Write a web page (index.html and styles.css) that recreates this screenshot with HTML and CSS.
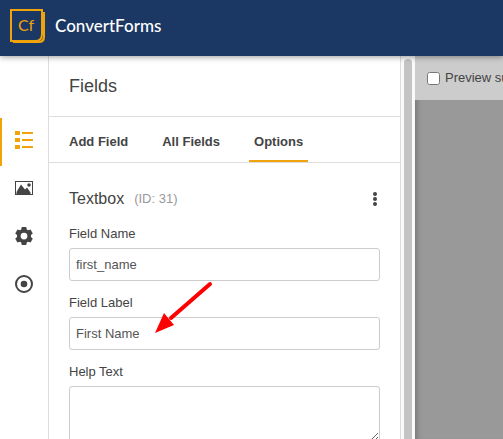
FILE: index.html
```html
<!DOCTYPE html>
<html lang="en">
<head>
    <meta charset="UTF-8">
    <meta name="viewport" content="width=device-width, initial-scale=1.0">
    <title>ConvertForms</title>
    <link rel="stylesheet" href="styles.css">
</head>
<body>
    <header class="topbar">
        <svg class="logo" width="36" height="36" viewBox="0 0 36 36" aria-hidden="true">
            <path d="M33 3h2v25q0 6-6 6H3v-2h25q5 0 5-5z" fill="#f0a30a"/>
            <path d="M1 1h31v24q0 7-7 7H1z" fill="#1b3764" stroke="#f0a30a" stroke-width="2"/>
            <text class="logo-text" x="8" y="22">Cf</text>
        </svg>
        <span class="brand">ConvertForms</span>
    </header>
    <div class="app">
        <nav class="sidebar">
            <button class="side-btn active" aria-label="Fields">
                <svg width="18" height="18" viewBox="0 0 18 18" fill="currentColor">
                    <path d="M0 0h5v4H0zM0 7h5v4H0zM0 14h5v4H0zM7 1h11v2H7zM7 8h11v2H7zM7 15h11v2H7z"/>
                </svg>
            </button>
            <button class="side-btn" aria-label="Design">
                <svg width="18" height="18" viewBox="0 0 18 18" fill="currentColor">
                    <path fill-rule="evenodd" d="M0 2h18v14H0zM1 3v12h16V3z"/>
                    <path d="M1.500 15V13L6 5.500l4 5 2-2 3.500 5V15z"/>
                    <circle cx="14" cy="6" r="1.800"/>
                </svg>
            </button>
            <button class="side-btn" aria-label="Settings">
                <svg width="18" height="18" viewBox="0 0 24 24" fill="currentColor">
                    <path fill-rule="evenodd" d="M9 0h6l.7 3.300 1.800 1 3.200-1 3 5.200-2.400 2.200v2.600l2.400 2.200-3 5.200-3.200-1-1.800 1L15 24H9l-.7-3.300-1.800-1-3.200 1-3-5.200 2.400-2.200v-2.600L.3 8.500l3-5.200 3.200 1 1.800-1zM12 7.500a4.500 4.500 0 1 0 0 9 4.500 4.500 0 0 0 0-9z"/>
                </svg>
            </button>
            <button class="side-btn" aria-label="Behavior">
                <svg width="18" height="18" viewBox="0 0 18 18">
                    <circle cx="9" cy="9" r="8" fill="none" stroke="currentColor" stroke-width="2"/>
                    <circle cx="9" cy="9" r="3.300" fill="currentColor"/>
                </svg>
            </button>
        </nav>
        <main class="panel">
            <h1 class="panel-title">Fields</h1>
            <div class="tabs">
                <button class="tab">Add Field</button>
                <button class="tab">All Fields</button>
                <button class="tab active">Options</button>
            </div>
            <form class="options">
                <div class="options-head">
                    <h2>Textbox</h2>
                    <span class="field-id">(ID: 31)</span>
                    <button type="button" class="more" aria-label="More">
                        <svg width="4" height="14" viewBox="0 0 4 14" fill="currentColor">
                            <circle cx="2" cy="2" r="2"/>
                            <circle cx="2" cy="7" r="2"/>
                            <circle cx="2" cy="12" r="2"/>
                        </svg>
                    </button>
                </div>
                <div class="field">
                    <label for="field-name">Field Name</label>
                    <input type="text" id="field-name" value="first_name">
                </div>
                <div class="field">
                    <label for="field-label">Field Label</label>
                    <input type="text" id="field-label" value="First Name">
                    <svg class="arrow" width="60" height="54" viewBox="0 0 60 54" aria-hidden="true">
                        <path d="M57 3L18 37" stroke="#f00" stroke-width="4" stroke-linecap="round"/>
                        <path d="M2 52L11 32L21 44z" fill="#f00"/>
                    </svg>
                </div>
                <div class="field">
                    <label for="help-text">Help Text</label>
                    <textarea id="help-text"></textarea>
                </div>
            </form>
        </main>
        <div class="scrollbar"><div class="thumb"></div></div>
        <section class="preview">
            <div class="preview-bar">
                <input type="checkbox" id="preview-success">
                <label for="preview-success">Preview successful submission</label>
            </div>
        </section>
    </div>
</body>
</html>
```

FILE: styles.css
```css
* {
    box-sizing: border-box;
}
body {
    font-family: "Liberation Sans", Arial, sans-serif;
    font-size: 13px;
    line-height: 16px;
    color: #444;
    margin: 0;
    height: 100vh;
    display: flex;
    flex-direction: column;
    overflow: hidden;
}
button {
    background: none;
    border: none;
    padding: 0;
    font: inherit;
    color: inherit;
    cursor: pointer;
}

/* Top bar */
.topbar {
    flex: none;
    display: flex;
    align-items: center;
    gap: 9px;
    height: 56px;
    padding: 0 10px 2px;
    background: #1b3764;
    box-shadow: 0 1px 6px rgba(0, 0, 0, 0.4);
    z-index: 1;
}
.logo-text {
    font-family: Lato, sans-serif;
    font-size: 16px;
    fill: #f0a30a;
}
.brand {
    padding-bottom: 2px;
    font-family: Lato, sans-serif;
    font-size: 17px;
    font-weight: 500;
    color: #fff;
}
.app {
    flex: 1;
    min-height: 0;
    display: flex;
}

/* Sidebar */
.sidebar {
    flex: none;
    width: 49px;
    padding-top: 62px;
    border-right: 1px solid #ddd;
}
.side-btn {
    display: flex;
    align-items: center;
    justify-content: center;
    width: 100%;
    height: 48px;
    padding: 0 2px 4px 0;
    border-left: 2px solid transparent;
}
.side-btn.active {
    color: #f0a30a;
    border-left-color: #f0a30a;
}

/* Panel */
.panel {
    flex: none;
    width: 352px;
    border-right: 1px solid #ddd;
    overflow: hidden;
}
.panel-title {
    margin: 0;
    padding: 20px;
    font-size: 18px;
    font-weight: normal;
    line-height: 20px;
    border-bottom: 1px solid #ddd;
}
.tabs {
    display: flex;
    gap: 24px;
    padding: 0 15px;
    border-bottom: 1px solid #ddd;
}
.tab {
    height: 45px;
    padding: 6px 5px 0;
    font-weight: bold;
    border-bottom: 2px solid transparent;
}
.tab.active {
    border-bottom-color: #f0a30a;
}
.options {
    padding: 26px 20px;
}
.options-head {
    display: flex;
    align-items: center;
    gap: 10px;
    height: 20px;
    margin-bottom: 17px;
}
.options-head h2 {
    margin: 0;
    font-size: 16px;
    font-weight: normal;
}
.field-id {
    color: #999;
}
.more {
    display: flex;
    margin-left: auto;
    padding: 0 3px;
}
.field {
    position: relative;
    margin-bottom: 14px;
}
.field label {
    display: block;
    margin-bottom: 6px;
}
.field input,
.field textarea {
    display: block;
    width: 100%;
    height: 33px;
    padding: 0 6px;
    font: inherit;
    color: #555;
    background: #fff;
    border: 1px solid #ccc;
    border-radius: 3px;
}
.field textarea {
    height: 56px;
}
.arrow {
    position: absolute;
    left: 84px;
    top: -14px;
}

/* Scrollbar */
.scrollbar {
    flex: none;
    width: 14px;
    padding: 3px 3px 0;
    background: #fafafa;
}
.thumb {
    height: 100%;
    background: #c4c4c4;
    border-radius: 4px 4px 0 0;
}

/* Preview */
.preview {
    flex: 1;
    min-width: 0;
    background: #999;
    box-shadow: inset 6px 0 6px -5px rgba(0, 0, 0, 0.3);
    overflow: hidden;
}
.preview-bar {
    display: flex;
    align-items: center;
    gap: 5px;
    height: 44px;
    padding-left: 12px;
    background: #ccc;
    white-space: nowrap;
}
.preview-bar input {
    flex: none;
    width: 13px;
    height: 13px;
    margin: 0;
}
```
